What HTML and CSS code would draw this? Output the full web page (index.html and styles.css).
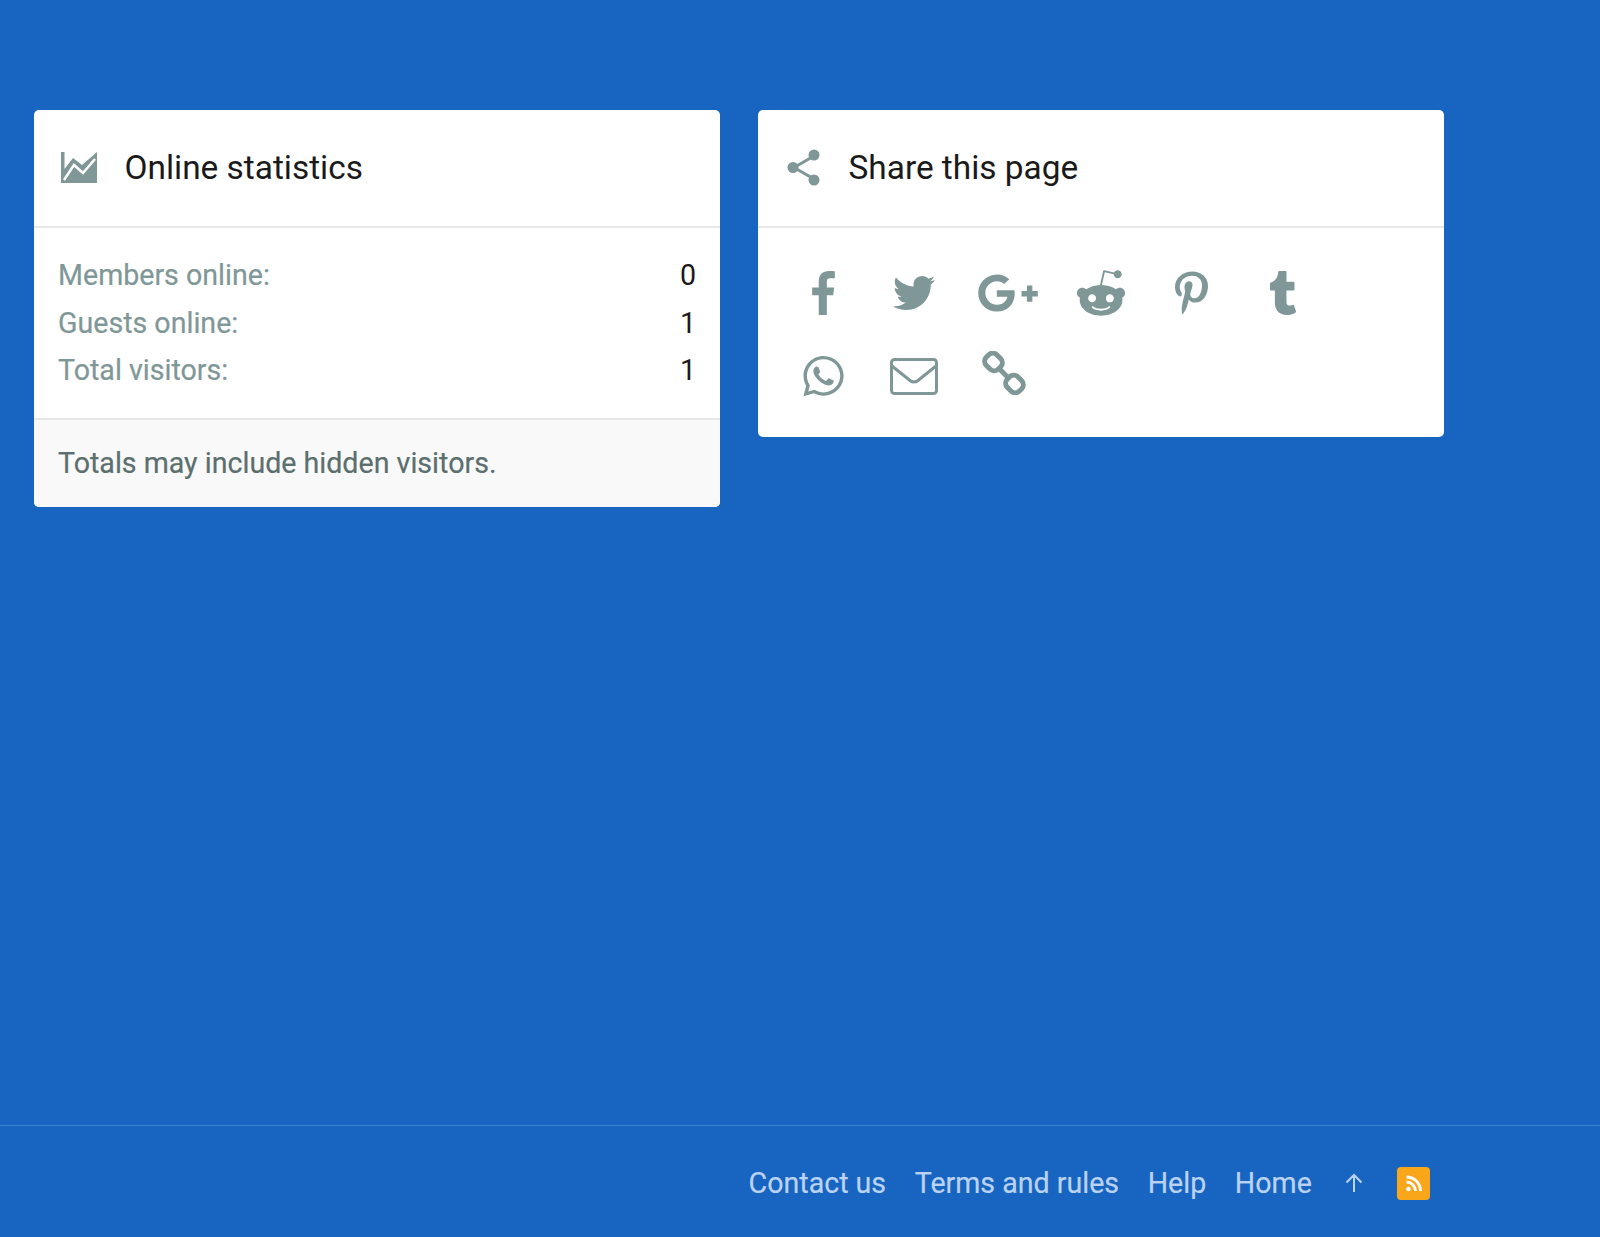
FILE: index.html
```html
<!DOCTYPE html>
<html lang="en">
<head>
<meta charset="utf-8">
<title>Online statistics</title>
<link rel="stylesheet" href="styles.css">
</head>
<body>
<main class="main">
  <section class="card">
    <h3 class="card-head">
      <svg class="head-icon" viewBox="0 0 36 31" width="36" height="31"><polygon class="ico" points="0,0 3.500,0 3.500,17 12,6 21,13 36,0 36,31 0,31"/><polyline class="chart-line" points="3,28 13,13 22,21 34,7"/></svg>
      <span class="head-title">Online statistics</span>
    </h3>
    <dl class="stats">
      <div class="stat"><dt>Members online:</dt><dd>0</dd></div>
      <div class="stat"><dt>Guests online:</dt><dd>1</dd></div>
      <div class="stat"><dt>Total visitors:</dt><dd>1</dd></div>
    </dl>
    <p class="note">Totals may include hidden visitors.</p>
  </section>
  <section class="card">
    <h3 class="card-head">
      <svg class="head-icon" viewBox="-1 0 36 37" width="36" height="37"><g class="share-lines"><path d="M28 7 8 18.500 28 30"/></g><circle class="ico" cx="28" cy="6" r="5.500"/><circle class="ico" cx="7" cy="18.500" r="5.500"/><circle class="ico" cx="28" cy="31" r="5.500"/></svg>
      <span class="head-title">Share this page</span>
    </h3>
    <div class="share-grid">
      <a class="share"><svg width="23" height="44" viewBox="0 0 264 512"><path class="ico" d="M76.700 512V283H0v-91h76.700v-71.700C76.700 42.400 124.300 0 193.800 0c33.300 0 61.900 2.500 70.200 3.600V85h-48.200c-37.800 0-45.100 18-45.100 44.300V192H256l-11.700 91h-73.600v229"/></svg></a>
      <a class="share share-bird"><svg width="42" height="42" viewBox="0 0 512 512"><path class="ico" d="M459.370 151.716c.325 4.548.325 9.097.325 13.645 0 138.720-105.583 298.558-298.558 298.558-59.452 0-114.680-17.219-161.137-47.106 8.447.974 16.568 1.299 25.340 1.299 49.055 0 94.213-16.568 130.274-44.832-46.132-.975-84.792-31.188-98.112-72.772 6.498.974 12.995 1.624 19.818 1.624 9.421 0 18.843-1.300 27.614-3.573-48.081-9.747-84.143-51.980-84.143-102.985v-1.299c13.969 7.797 30.214 12.670 47.431 13.319-28.264-18.843-46.781-51.005-46.781-87.391 0-19.492 5.197-37.360 14.294-52.954 51.655 63.675 129.300 105.258 216.365 109.807-1.624-7.797-2.599-15.918-2.599-24.040 0-57.828 46.782-104.934 104.934-104.934 30.213 0 57.502 12.670 76.670 33.137 23.715-4.548 46.456-13.320 66.599-25.340-7.798 24.366-24.366 44.833-46.132 57.827 21.117-2.273 41.584-8.122 60.426-16.243-14.292 20.791-32.161 39.308-52.628 54.253z"/></svg></a>
      <a class="share share-gplus"><svg width="62" height="50" viewBox="0 0 640 512"><path class="ico" d="M386.061 228.496c1.834 9.692 3.143 19.384 3.143 31.956C389.204 370.205 315.599 448 204.800 448c-106.084 0-192-85.915-192-192s85.916-192 192-192c51.864 0 95.083 18.859 128.611 50.292l-52.126 50.030c-14.145-13.621-39.028-29.599-76.485-29.599-65.484 0-118.920 54.221-118.920 121.277 0 67.056 53.436 121.277 118.920 121.277 75.961 0 104.513-54.745 108.965-82.773H204.800v-66.009h181.261zm185.406 6.437V179.200h-56.001v55.733h-55.733v56.001h55.733v55.733h56.001v-55.733H627.200v-56.001h-55.733z"/></svg></a>
      <a class="share share-alien"><svg width="52" height="52" viewBox="0 0 512 512"><path class="ico" d="M440.300 203.500c-15 0-28.200 6.200-37.900 15.900-35.700-24.700-83.800-40.600-137.100-42.300L293 52.300l88.200 19.800c0 21.600 17.600 39.200 39.200 39.200 22 0 39.700-18.100 39.700-39.700s-17.600-39.700-39.700-39.700c-15.400 0-28.700 9.300-35.300 22l-97.400-21.600c-4.900-1.300-9.700 2.200-11 7.100L246.300 177c-52.900 2.200-100.500 18.100-136.300 42.800-9.700-10.100-23.400-16.300-38.400-16.300-55.600 0-73.800 74.600-22.900 100.100-1.800 7.900-2.600 16.300-2.600 24.700 0 83.800 94.400 151.700 210.300 151.700 116.400 0 210.800-67.900 210.800-151.700 0-8.400-.9-17.200-3.100-25.100 49.900-25.600 31.500-99.700-23.800-99.700zM129.400 308.900c0-22 17.600-39.700 39.700-39.700 21.600 0 39.200 17.600 39.200 39.700 0 21.600-17.600 39.200-39.200 39.200-22 .1-39.700-17.600-39.700-39.200zm214.300 93.500c-36.400 36.400-139.100 36.400-175.500 0-4-3.500-4-9.700 0-13.700 3.500-3.500 9.700-3.500 13.200 0 27.800 28.500 120 29 149 0 3.500-3.500 9.700-3.500 13.200 0 4.100 4 4.100 10.200.1 13.700zm-.8-54.200c-21.600 0-39.200-17.600-39.200-39.200 0-22 17.600-39.700 39.200-39.700 22 0 39.700 17.600 39.700 39.700-.1 21.500-17.700 39.200-39.700 39.200z"/></svg></a>
      <a class="share"><svg width="33" height="44" viewBox="0 0 384 512"><path class="ico" d="M204 6.500C101.400 6.500 0 74.900 0 185.600 0 256 39.600 296 63.600 296c9.900 0 15.600-27.600 15.600-35.400 0-9.300-23.700-29.100-23.700-67.800 0-80.400 61.200-137.400 140.400-137.400 68.100 0 118.500 38.700 118.500 109.800 0 53.100-21.300 152.700-90.300 152.700-24.900 0-46.200-18-46.200-43.800 0-37.800 26.400-74.400 26.400-113.400 0-66.200-93.900-54.200-93.900 25.800 0 16.800 2.100 35.400 9.600 50.700-13.800 59.400-42 147.900-42 209.100 0 18.900 2.700 37.500 4.500 56.400 3.400 3.800 1.700 3.400 6.900 1.500 50.400-69 48.600-82.500 71.400-172.800 12.300 23.400 44.100 36 69.300 36 106.200 0 153.900-103.500 153.900-196.800C384 71.300 298.200 6.500 204 6.500z"/></svg></a>
      <a class="share"><svg width="28" height="44" viewBox="0 0 320 512"><path class="ico" d="M309.800 480.300c-13.600 14.500-50 31.700-97.400 31.700-120.800 0-147-88.800-147-140.600v-144H17.900c-5.500 0-10-4.500-10-10v-68c0-7.200 4.500-13.600 11.300-16 62-21.800 81.500-76 84.300-117.100.8-11 6.500-16.300 16.100-16.300h70.900c5.500 0 10 4.500 10 10v115.200h83c5.500 0 10 4.400 10 9.900v81.700c0 5.500-4.500 10-10 10h-83.400V360c0 34.200 23.700 53.600 68 35.800 4.800-1.900 9-3.200 12.700-2.200 3.500.9 5.800 3.400 7.400 7.900l22 64.300c1.800 5 3.300 10.600-.4 14.500z"/></svg></a>
      <a class="share"><svg width="41" height="46" viewBox="0 0 448 512"><path class="ico" d="M380.900 97.100C339 55.100 283.200 32 223.900 32c-122.400 0-222 99.600-222 222 0 39.100 10.200 77.300 29.600 111L0 480l117.700-30.900c32.400 17.700 68.900 27 106.100 27h.1c122.300 0 224.100-99.600 224.100-222 0-59.300-25.200-115-67.100-157zm-157 341.600c-33.200 0-65.700-8.900-94-25.700l-6.700-4-69.800 18.300L72 359.200l-4.400-7c-18.500-29.400-28.200-63.300-28.200-98.200 0-101.700 82.800-184.500 184.600-184.500 49.300 0 95.600 19.200 130.400 54.100 34.800 34.900 56.200 81.200 56.100 130.500 0 101.800-84.900 184.600-186.600 184.600zm101.200-138.200c-5.500-2.800-32.800-16.200-37.900-18-5.100-1.900-8.800-2.800-12.500 2.800-3.700 5.600-14.300 18-17.600 21.800-3.200 3.700-6.500 4.200-12 1.400-32.600-16.300-54-29.100-75.500-66-5.700-9.800 5.700-9.100 16.300-30.300 1.800-3.700.9-6.900-.5-9.700-1.400-2.800-12.500-30.100-17.100-41.200-4.500-10.800-9.100-9.300-12.500-9.500-3.200-.2-6.900-.2-10.600-.2-3.700 0-9.700 1.400-14.800 6.900-5.100 5.600-19.400 19-19.400 46.300 0 27.300 19.900 53.700 22.600 57.400 2.800 3.700 39.100 59.700 94.800 83.800 35.200 15.200 49 16.500 66.600 13.900 10.700-1.600 32.800-13.400 37.400-26.400 4.600-13 4.600-24.100 3.200-26.400-1.300-2.500-5-3.900-10.500-6.600z"/></svg></a>
      <a class="share share-bird"><svg width="48" height="37" viewBox="0 0 48 37"><rect class="ico-line" x="1.500" y="1.500" width="45" height="34" rx="3"/><path class="ico-line" d="M2 8 20 22.500Q24 25.500 28 22.500L46 8"/></svg></a>
      <a class="share share-link"><svg width="44" height="44" viewBox="0 0 44 44"><rect class="ico-thick" x="3" y="3.500" width="17" height="15" rx="6" transform="rotate(45 11.500 11)"/><rect class="ico-thick" x="24" y="25.500" width="17" height="15" rx="6" transform="rotate(45 32.500 33)"/><path class="ico-thick" d="M17.500 18 26 26.500"/></svg></a>
    </div>
  </section>
</main>
<footer class="footer">
  <a class="foot-link">Contact us</a>
  <a class="foot-link">Terms and rules</a>
  <a class="foot-link">Help</a>
  <a class="foot-link">Home</a>
  <svg class="foot-arrow" width="20" height="20" viewBox="0 0 20 20"><path d="M10 19V2M2.500 9.500 10 2l7.500 7.500"/></svg>
  <a class="rss"><svg width="16" height="17" viewBox="0 0 16 16"><circle cx="2.500" cy="13.500" r="2.300"/><path d="M.5 6.500a9 9 0 0 1 9 9" /><path d="M.5 1.500a14 14 0 0 1 14 14"/></svg></a>
</footer>
</body>
</html>
```
FILE: styles.css
```css
* { box-sizing: border-box; }
html, body { height: 100%; }
body {
  margin: 0;
  display: flex;
  flex-direction: column;
  background: #1765c1;
  font-family: Roboto, "Liberation Sans", sans-serif;
}
.main {
  flex: 1;
  display: flex;
  align-items: flex-start;
  gap: 38px;
  padding: 110px 0 0 34px;
}
.card {
  width: 686px;
  background: #fff;
  border-radius: 5px;
  overflow: hidden;
}
.card-head {
  display: flex;
  align-items: center;
  height: 117.500px;
  margin: 0;
  padding: 0 0 0 27px;
  border-bottom: 2px solid #e7e9e9;
  font-size: 33.400px;
  font-weight: 400;
  color: #1a1a1a;
}
.head-icon { flex: none; }
.head-title { margin-left: 27.500px; }
.ico { fill: #7f9797; }
.chart-line { fill: none; stroke: #fff; stroke-width: 2.500; }
.share-lines path { fill: none; stroke: #7f9797; stroke-width: 3; }
.ico-line { fill: none; stroke: #7f9797; stroke-width: 3; }
.ico-thick { fill: none; stroke: #7f9797; stroke-width: 5; }
.stats { margin: 0; padding: 24.500px 24px 23.500px; }
.stat {
  display: flex;
  justify-content: space-between;
  height: 47.500px;
  line-height: 47.500px;
  font-size: 28.600px;
}
.stat dt { color: #7f9797; -webkit-text-stroke: 0.2px #7f9797; }
.stat dd { margin: 0; color: #1a1a1a; }
.note {
  margin: 0;
  height: 88.500px;
  padding: 0 24px;
  line-height: 87px;
  font-size: 28.600px;
  color: #5c6f6f;
  -webkit-text-stroke: 0.2px #5c6f6f;
  background: #f9f9f9;
  border-top: 2px solid #e7e9e9;
}
.share-grid {
  display: grid;
  grid-template-columns: repeat(6, 91.800px);
  grid-auto-rows: 83px;
  padding: 24px 20px 19.500px;
}
.share { display: flex; align-items: center; justify-content: center; }
.share-bird svg { margin-right: 4px; }
.share-gplus svg { margin-left: 2px; }
.share-alien svg { margin-left: 4px; }
.share-link svg { margin-left: -7px; margin-top: -6px; }
.footer {
  flex: none;
  height: 111.700px;
  display: flex;
  align-items: center;
  justify-content: flex-end;
  gap: 28.600px;
  padding: 3px 170px 0 0;
  border-top: 1px solid #3a7fd2;
}
.foot-link { font-size: 28.600px; color: #bbd2f1; -webkit-text-stroke: 0.2px #bbd2f1; }
.foot-arrow { fill: none; stroke: #bbd2f1; stroke-width: 2; margin: 0 4px 0 4px; }
.rss {
  display: flex;
  align-items: center;
  justify-content: center;
  width: 33px;
  height: 33px;
  border-radius: 4px;
  background: #f9a61a;
}
.rss circle { fill: #fff; }
.rss path { fill: none; stroke: #fff; stroke-width: 2.800; }
```
